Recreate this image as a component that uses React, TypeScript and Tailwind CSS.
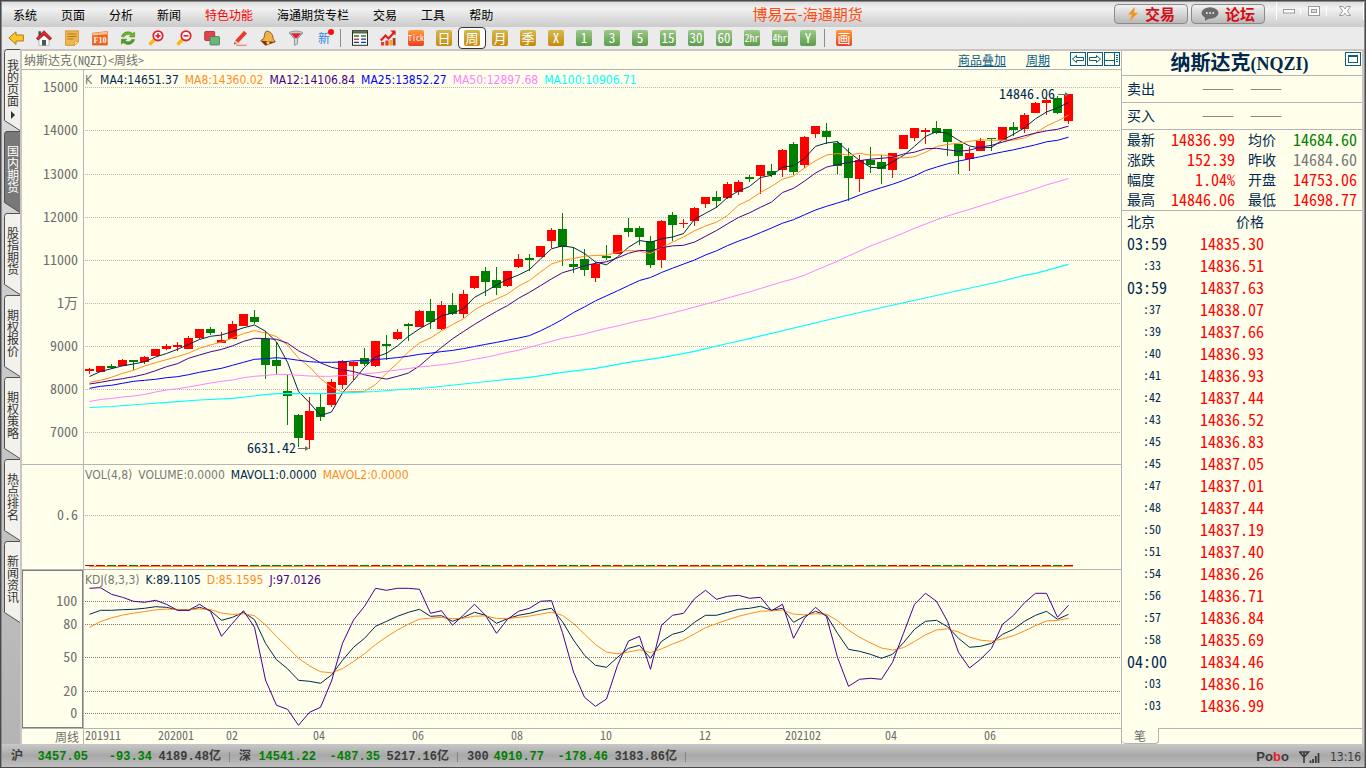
import React from 'react';

const MONO = 'font-["Noto_Sans_Mono_CJK_SC","Liberation_Mono","Noto_Sans_CJK_SC",monospace]';
const LEGEND = 'font-["DejaVu_Sans_Condensed","DejaVu_Sans","Noto_Sans_CJK_SC",sans-serif]';

const NAVY = '#002850';
const ORANGE = '#ff8c1e';
const PURPLE = '#46008c';

/* ---------- chart data: [rising, high, body top, body bottom, low] ---------- */
type Candle = [number, number, number, number, number];

const CANDLES: Candle[] = [
  [1, 368, 369, 371, 374], [1, 366, 366, 372, 372], [0, 364, 366, 368, 369], [1, 359, 360, 366, 366],
  [0, 360, 360, 362, 370], [1, 356, 357, 362, 364], [1, 349, 349, 356, 356], [1, 344, 346, 349, 350],
  [1, 342, 345, 347, 351], [1, 336, 338, 349, 349], [1, 329, 329, 338, 339], [0, 327, 329, 333, 335],
  [1, 332, 340, 343, 343], [1, 321, 324, 339, 339], [1, 314, 314, 326, 326], [0, 310, 317, 322, 324],
  [0, 331, 339, 365, 379], [0, 342, 360, 366, 374], [0, 375, 391, 396, 425], [0, 414, 415, 438, 447],
  [1, 397, 411, 440, 449], [0, 394, 407, 417, 421], [1, 379, 382, 405, 407], [1, 360, 361, 385, 389],
  [1, 361, 362, 366, 380], [0, 348, 358, 364, 366], [1, 341, 341, 366, 367], [0, 335, 344, 346, 360],
  [1, 329, 332, 339, 340], [0, 323, 324, 326, 341], [1, 310, 311, 327, 327], [0, 299, 311, 322, 329],
  [1, 301, 305, 329, 330], [0, 293, 305, 314, 315], [1, 290, 294, 314, 318], [1, 276, 276, 288, 289],
  [0, 267, 271, 282, 296], [0, 267, 280, 288, 295], [1, 271, 271, 286, 287], [1, 254, 259, 267, 268],
  [0, 254, 258, 260, 271], [1, 246, 246, 257, 257], [1, 228, 230, 241, 248], [0, 213, 229, 247, 266],
  [0, 247, 264, 267, 273], [0, 249, 259, 270, 276], [1, 262, 264, 278, 282], [0, 245, 256, 258, 260],
  [1, 235, 235, 254, 254], [0, 218, 228, 232, 237], [0, 226, 228, 237, 245], [0, 236, 241, 265, 268],
  [1, 220, 221, 260, 268], [0, 212, 215, 225, 241], [1, 219, 223, 224, 228], [1, 207, 208, 221, 226],
  [1, 197, 197, 204, 208], [0, 191, 197, 201, 208], [1, 182, 184, 198, 199], [1, 180, 182, 192, 195],
  [0, 175, 177, 179, 182], [1, 165, 165, 176, 194], [0, 164, 171, 175, 177], [1, 149, 150, 170, 177],
  [0, 142, 144, 172, 175], [1, 136, 137, 165, 168], [1, 126, 126, 134, 138], [0, 123, 131, 137, 144],
  [0, 141, 143, 166, 174], [0, 148, 156, 178, 201], [1, 155, 160, 179, 192], [0, 147, 160, 165, 173],
  [0, 155, 162, 169, 184], [1, 153, 153, 170, 178], [1, 135, 135, 149, 149], [1, 128, 128, 138, 141],
  [1, 128, 130, 132, 144], [0, 121, 128, 133, 134], [0, 129, 129, 142, 156], [0, 144, 144, 156, 174],
  [1, 147, 153, 159, 171], [1, 138, 141, 151, 151], [0, 138, 138, 139, 151], [1, 127, 127, 140, 140],
  [0, 122, 127, 130, 136], [1, 113, 115, 129, 133], [1, 102, 103, 113, 113], [1, 98, 100, 103, 115],
  [0, 96, 98, 113, 114], [1, 94, 94, 121, 124],
];

const barX = (i: number) => 89.5 + 11 * i;
const closes = CANDLES.map((c) => (c[0] ? c[2] : c[3]));

/* Moving average over n bars; `head` supplies the bars before n closes exist. */
function average(n: number, head: number[]): number[] {
  return closes.map((_, i) => {
    if (i < head.length) return head[i];
    const part = closes.slice(i - n + 1, i + 1);
    return part.reduce((a, b) => a + b, 0) / n;
  });
}

const MA4 = average(4, [376.5, 371.5, 368.7]);
const MA8 = average(8, [382.3, 380.3, 377.3, 373.3, 370.3, 366, 362.7]);
const MA12 = average(12, [384, 382.3, 380.3, 378.7, 376.7, 374.3, 370.7, 366.7, 363.7, 358.3, 355]);
const MA25 = average(25, [
  388.3, 386.3, 385.3, 383.3, 381.3, 380.3, 379.3, 377.7, 376.7, 374.7, 372.3, 370.3, 368.3, 365.3, 362.3, 359.3,
  358.7, 357.7, 358.7, 360.3, 361.7, 362.3, 362.3, 362,
]);
const MA50 = average(50, [
  401.5, 399.5, 398.5, 397, 396, 394.5, 392, 390, 388.7, 387, 385, 383, 381.3, 380, 377.7, 376.3, 375.5, 374.3,
  374.5, 375.3, 376, 376.3, 376.3, 375.5, 375, 373.7, 373, 371.3, 370, 368.5, 367, 366, 364.7, 363.3, 361.3, 359.3,
  357.3, 355, 352.3, 350.3, 347.3, 344.3, 341.3, 338.3, 336.3, 334, 331, 328.3, 326,
]);
const MA100: [number, number][] = [
  [0, 407.5], [2, 406.5], [5, 404], [8, 401.7], [10, 400], [13, 398.3], [16, 394.7], [17, 393.7], [22, 393.7],
  [26, 391.5], [29, 389], [31, 387.5], [34, 384], [37, 380.5], [40, 377.3], [43, 372.3], [46, 368.3], [49, 362.3],
  [52, 357.7], [55, 351.3], [58, 343.5], [60, 338.7], [69, 315], [78, 293], [83, 281], [85, 275.3], [86, 273.3],
  [89, 264.3],
];

const KDJ_K = [
  614.3, 610.3, 610.3, 609.7, 609.3, 608.3, 606.7, 607.3, 610, 610.3, 607.3, 610.7, 620.3, 617.3, 612.3, 619.7,
  643.3, 659.7, 668.7, 680.3, 681.3, 683.3, 675, 660.3, 647.3, 638.3, 626.3, 621.3, 616.3, 612.3, 609.3, 616.3,
  615.7, 621.3, 617.3, 612.3, 615.3, 623.3, 618.7, 615.3, 613.3, 610.3, 608.3, 621.7, 640, 655.3, 665.3, 667.3,
  657.3, 648.3, 645.3, 658.3, 641.3, 634.3, 631.3, 622.3, 615.3, 615.3, 612.3, 609.3, 608.3, 606.3, 610.3, 608.3,
  622.3, 616.3, 611.3, 615.3, 633.3, 649.3, 651.3, 654.3, 658.3, 654.3, 642.7, 629.3, 621.3, 620.3, 626.7, 638.3,
  647.3, 646.3, 643.3, 634.3, 629.3, 621.3, 615.3, 611.3, 619.3, 614.3,
];
const KDJ_J = [
  588.3, 587.7, 594.3, 597.3, 601.3, 602.3, 600.3, 604.3, 610.3, 610.3, 604.3, 611.3, 636.3, 623.3, 610.7, 627.3,
  680, 705.3, 709.3, 725.3, 712.3, 707.3, 681, 643.3, 620, 606.3, 588.3, 590.3, 588.3, 588.3, 589.3, 613.3, 610.7,
  625.3, 615, 604.3, 615.3, 633.3, 619.3, 611.3, 608.3, 601.3, 600.7, 632.7, 672, 697.3, 706.3, 699, 665.3, 641,
  636.3, 669.3, 625.3, 615.3, 613.3, 598.7, 590.3, 599.3, 596.3, 595.3, 598.3, 597.3, 610.7, 604.3, 638.3, 618.3,
  607.3, 616.7, 657.3, 686.3, 679.3, 678.3, 679.3, 662.3, 633.3, 604.3, 593.3, 601.3, 621.3, 652.3, 668, 659.3,
  648.3, 624.3, 615.3, 602.7, 593.3, 593.3, 617.3, 605.3,
];
/* D is the smoothed K line: two parts of the previous value, one part of K. */
const KDJ_D: number[] = [];
KDJ_K.forEach((k, i) => KDJ_D.push(i === 0 ? 627.3 : (2 * KDJ_D[i - 1] + k) / 3));

const path = (ys: number[]) => ys.map((y, i) => `${barX(i)},${y.toFixed(1)}`).join(' ');

function Line({ ys, color }: { ys: number[]; color: string }) {
  return <polyline points={path(ys)} fill="none" stroke={color} strokeWidth="1" vectorEffect="non-scaling-stroke" />;
}

function Grid({ ys, color }: { ys: number[]; color: string }) {
  return (
    <g stroke={color} strokeDasharray="1 1" shapeRendering="crispEdges">
      {ys.map((y) => (
        <line key={y} x1="85" x2="1121" y1={y + 0.5} y2={y + 0.5} />
      ))}
    </g>
  );
}

function Axis({ top, height, marks }: { top: number; height: number; marks: [string, number][] }) {
  return (
    <svg className={`block h-full w-full ${MONO} text-sm`} fill="#6e6e6e">
      {marks.map(([label, y]) => (
        <text key={label} x="92%" y={`${((y - 1 - top) / height) * 100}%`} textAnchor="end" dominantBaseline="central">
          {label}
        </text>
      ))}
    </svg>
  );
}

function Legend({ items }: { items: [string, string][] }) {
  return (
    <div className={`absolute left-px top-0.5 flex gap-1.5 whitespace-nowrap text-xs leading-4 ${LEGEND}`}>
      {items.map(([text, cls]) => (
        <span key={text} className={cls}>
          {text}
        </span>
      ))}
    </div>
  );
}

/* ------------------------------- tool icons ------------------------------- */
const ICONS: Record<string, React.ReactNode> = {
  后退: (
    <path d="M.8 8 8 1.8V5h7.4v6H8v3.4z" fill="#fbc52c" stroke="#b7791b" strokeLinejoin="round" />
  ),
  首页: (
    <>
      <path d="M3 7v8.5h10V7L8 3z" fill="#fafafa" stroke="#9a9a9a" strokeWidth=".6" />
      <path d="M2.500 1.200h2.400v3l-2.400 2z" fill="#4a4a4a" />
      <path d="M.3 8.400 8 .7l7.700 7.700-2 1.600L8 4.900 2.300 10z" fill="#d8242b" stroke="#7e1216" strokeWidth=".7" />
      <path d="M6 10h4v5.500H6z" fill="#4b555f" />
    </>
  ),
  便签: (
    <>
      <path d="M1.500.8h13v11l-4 3.600h-9z" fill="#eeb64d" stroke="#c88a22" strokeWidth=".7" />
      <path d="M14.500 11.800h-4v3.600z" fill="#fde5b0" stroke="#c88a22" strokeWidth=".5" />
      <path d="M3.500 4h9M3.500 6.500h9M3.500 9h6" stroke="#a8701a" strokeWidth=".9" />
    </>
  ),
  F10: (
    <>
      <path d="M.5 3.200 15.300 1.600v13.500H.5z" fill="#f0641e" stroke="#d04a12" strokeWidth=".6" />
      <path d="M.5 3.200 15.300 1.600v2.600L.5 5.600z" fill="#fbc089" />
      <text x="8" y="12.600" fontSize="8" fontWeight="700" textAnchor="middle" fill="#fff">
        F10
      </text>
    </>
  ),
  刷新: (
    <>
      <path d="M1.500 6.800C2 3.600 5 1.800 8 1.800c2 0 3.600.7 4.800 1.800L14.600 2v5H9.200l1.600-1.600C9 3.900 5 4.300 4.300 6.800z" fill="#6fb52f" stroke="#3f7d16" strokeWidth=".5" />
      <path d="M14.500 9.400c-.5 3.200-3.500 5-6.500 5-2 0-3.600-.7-4.800-1.800L1.400 14.200v-5h5.400L5.200 10.800C7 12.300 11 11.900 11.700 9.400z" fill="#4f9a22" stroke="#3f7d16" strokeWidth=".5" />
    </>
  ),
  放大: (
    <>
      <path d="m6.500 9.500-4 4" stroke="#f7b917" strokeWidth="3.600" strokeLinecap="round" />
      <circle cx="10" cy="5.800" r="4.700" fill="#fff" stroke="#e2212b" strokeWidth="1.800" />
      <path d="M10 3.300v5M7.500 5.800h5" stroke="#e2212b" strokeWidth="1.700" />
    </>
  ),
  缩小: (
    <>
      <path d="m6.500 9.500-4 4" stroke="#f7b917" strokeWidth="3.600" strokeLinecap="round" />
      <circle cx="10" cy="5.800" r="4.700" fill="#fff" stroke="#e2212b" strokeWidth="1.800" />
      <path d="M7.500 5.800h5" stroke="#e2212b" strokeWidth="1.700" />
    </>
  ),
  叠加: (
    <>
      <rect x=".7" y="1.500" width="10" height="9" rx=".8" fill="#e0444b" stroke="#b41f27" strokeWidth=".8" />
      <rect x="6" y="6.500" width="9.500" height="8.500" rx=".8" fill="#6fb27a" stroke="#3e7f4b" strokeWidth=".8" />
    </>
  ),
  画笔: (
    <>
      <path d="m2 14.500 1.500-4.200L12 .8l3 2.600-8.600 9.400z" fill="#ea3a2d" />
      <path d="m3.500 10.300 2.900 2.500L2 14.500z" fill="#f0c48c" />
      <path d="M2 14.500l.7-2 1.100 1z" fill="#333" />
      <path d="M4 15.300h10.500" stroke="#ef7d75" strokeWidth="1.200" />
    </>
  ),
  预警: (
    <>
      <path d="M6.200 1.200C10.500 1 13 4.500 13 8.500l2.300 3.300L5.500 15.300.8 10.600l2.600-1.700C4.800 7.200 4 3.200 6.200 1.200z" fill="#efb54a" stroke="#8c4c15" strokeWidth=".9" />
      <path d="M1 10.800c3 .2 8.500.5 14 1l-9.600 3.400z" fill="#7a3713" />
      <circle cx="8" cy="12.800" r="1.600" fill="#f6cf4c" />
    </>
  ),
  筛选: (
    <>
      <path d="M1.500 3.200 6.600 9v6.300l2.800-1.500V9l5.100-5.800z" fill="#dfe3e6" stroke="#7d858c" strokeWidth=".9" />
      <ellipse cx="8" cy="3" rx="6.700" ry="1.900" fill="#c9ced2" stroke="#7d858c" strokeWidth=".8" />
      <path d="M3.200 3.200h9.600L9.200 8.200H6.800z" fill="#dc2733" />
    </>
  ),
  报价表: (
    <>
      <rect x=".5" y=".7" width="15" height="14.600" fill="#fff" stroke="#26301f" />
      <path d="M1 2.300h14" stroke="#55664a" strokeWidth="2.400" />
      <path d="M2 6h5M9 6h5" stroke="#2c7d26" strokeWidth="1.300" />
      <path d="M2 9.200h5" stroke="#cf2222" strokeWidth="1.300" />
      <path d="M9 9.200h5M2 12.400h5M9 12.400h5" stroke="#1b2f9c" strokeWidth="1.300" />
    </>
  ),
  走势: (
    <>
      <path d="M.8 10.500 5.500 5.500l3 3L15 1.500" fill="none" stroke="#e01e1e" strokeWidth="2.200" />
      <path d="M10.300.6h5.200v5z" fill="#e01e1e" />
      <path d="M1 12h3.200v3.500H1zM5.400 10.500h3.200v5H5.400z" fill="#e23a2b" />
      <path d="M9.400 10h2.700v5.500H9.400z" fill="#f2a62a" />
      <path d="M12.700 8h2.800v7.500h-2.800z" fill="#a8431c" />
    </>
  ),
};

function Icon({ name }: { name: string }) {
  return (
    <svg viewBox="0 0 16 16" className="h-4 w-4 font-['Liberation_Serif',serif]">
      {ICONS[name]}
    </svg>
  );
}

const GOLD = 'bg-gradient-to-b from-[#d3ba4c] to-[#c78900] text-white';
const GREEN = 'bg-gradient-to-b from-[#9cc886] to-[#5c9c4c] text-white';
const RED = 'bg-gradient-to-b from-[#ff9a3c] to-[#e83c1e] text-white';

function Badge({ text, tone }: { text: string; tone: string }) {
  const size = text.length > 3 ? 'text-[8px]' : text.length > 2 ? 'text-[10px]' : 'text-[13px]';
  return (
    <span className={`flex h-4 w-4 items-center justify-center rounded-xs leading-4 ${MONO} ${size} ${tone}`}>
      {text}
    </span>
  );
}

const PERIODS: [string, string][] = [
  ['Tick', RED], ['日', GOLD], ['周', GOLD], ['月', GOLD], ['季', GOLD], ['X', GOLD], ['1', GREEN], ['3', GREEN],
  ['5', GREEN], ['15', GREEN], ['30', GREEN], ['60', GREEN], ['2hr', GREEN], ['4hr', GREEN], ['Y', GREEN],
];

const Separator = () => (
  <span className="flex w-2 py-0.5">
    <span className="ml-0.5 w-px bg-[#8c8c8c]" />
  </span>
);

function Toolbar() {
  const tool = 'flex w-7 items-center justify-center';
  return (
    <div className="flex h-[22px] shrink-0 bg-[#ebebeb]">
      {['后退', '首页', '便签', 'F10', '刷新', '放大', '缩小', '叠加', '画笔', '预警', '筛选'].map((name) => (
        <button key={name} aria-label={name} className={tool}>
          <Icon name={name} />
        </button>
      ))}
      <button className={`${tool} relative text-xs text-[#2f8ce6]`}>
        新<span className="absolute right-1 top-0.5 h-1.5 w-1.5 rounded-full bg-[#ff0a0a]" />
      </button>
      <Separator />
      {['报价表', '走势'].map((name) => (
        <button key={name} aria-label={name} className={tool}>
          <Icon name={name} />
        </button>
      ))}
      {PERIODS.map(([text, tone]) => (
        <button key={text} className={text === '周' ? `${tool} rounded-sm border border-[#333] bg-white` : tool}>
          <Badge text={text} tone={tone} />
        </button>
      ))}
      <Separator />
      <button className={tool}>
        <Badge text="画" tone={RED} />
      </button>
    </div>
  );
}

function TitleBar() {
  const menus = ['系统', '页面', '分析', '新闻', '特色功能', '海通期货专栏', '交易', '工具', '帮助'];
  const pill =
    'flex h-5 w-[74px] items-center justify-center gap-1.5 rounded-sm border border-[#8a8a8a] bg-gradient-to-b from-[#f2f2f2] to-[#b9b9b9] text-[15px] font-bold leading-4 text-[#d80c18]';
  return (
    <header className="flex h-[25px] shrink-0 items-start bg-gradient-to-b from-[#dcdcdc] via-[#f2f2f2] via-25% to-[#cbcbcb]">
      <nav className="flex h-full items-center pt-px text-xs">
        {menus.map((m) => (
          <button key={m} className={m === '特色功能' ? 'px-3 text-[#ff0000]' : 'px-3 text-black first:pl-[11px]'}>
            {m}
          </button>
        ))}
      </nav>
      <h1 className="flex-1 pr-1 text-center text-[15px] leading-6 text-[#ff4b0f]">博易云-海通期货</h1>
      <div className="flex gap-[3px] pt-0.5">
        <button className={pill}>
          <svg viewBox="0 0 12 16" className="h-4 w-3">
            <path d="M8 .8 1 8.600h3.800L2.800 15.200 11 6.800H7z" fill="#f7931e" />
          </svg>
          交易
        </button>
        <button className={pill}>
          <svg viewBox="0 0 18 14" className="h-3.5 w-4.5">
            <ellipse cx="9" cy="6" rx="8.500" ry="5.700" fill="#6b6b6b" />
            <path d="M4 9v4.800L9 11z" fill="#6b6b6b" />
            <path d="M5 6h1.600M8.200 6h1.600M11.400 6H13" stroke="#fff" strokeWidth="1.500" />
          </svg>
          论坛
        </button>
      </div>
      <div className="ml-[11px] flex h-[18px] items-center divide-x divide-white border-x border-white">
        <button aria-label="最小化" className="flex w-6 justify-center">
          <svg viewBox="0 0 12 5" className="h-[5px] w-3">
            <rect x=".5" y=".5" width="11" height="3.500" fill="#fff" stroke="#9a9a9a" />
          </svg>
        </button>
        <button aria-label="最大化" className="flex w-[26px] justify-center">
          <svg viewBox="0 0 12 10" className="h-2.5 w-3">
            <rect x=".5" y=".5" width="11" height="9" fill="#fff" stroke="#9a9a9a" />
            <rect x="3.500" y="3.500" width="5" height="3" fill="#ddd" stroke="#9a9a9a" />
          </svg>
        </button>
        <button aria-label="关闭" className="flex w-9 justify-center">
          <svg viewBox="0 0 12 10" className="h-2.5 w-3">
            <path d="M.5.5h3.700L6 3 7.800.5h3.700L8.300 5l3.200 4.500H7.800L6 7 4.200 9.500H.5L3.700 5z" fill="#fff" stroke="#9a9a9a" />
          </svg>
        </button>
      </div>
    </header>
  );
}

function SideTabs() {
  const tabs = ['我的页面', '国内期货', '股指期货', '期权报价', '期权策略', '热点排名', '新闻资讯'];
  return (
    <nav className="w-[18px] shrink-0 bg-gradient-to-b from-[#dcdce0] to-[#b4b4b4]">
      {tabs.map((t, i) => (
        <button key={t} className="relative block h-[82px] w-full">
          <svg viewBox="0 0 18 82" className="absolute inset-0 h-full w-full">
            <path
              d="M18 .5H5Q2.500.5 2.500 3.500V71.500L18 81.500"
              fill={i === 1 ? '#787878' : '#f2f1ec'}
              stroke="#505050"
            />
          </svg>
          <span
            className={`relative flex h-full flex-col items-center pl-1 text-xs leading-3 ${
              i === 1 ? 'pt-3.5 text-white' : i === 0 ? 'pt-2.5 text-[#333]' : 'pt-3.5 text-[#333]'
            }`}
          >
            <span className="w-3">{t}</span>
            {i === 0 && (
              <svg viewBox="0 0 4 8" className="mt-1 h-2 w-1">
                <path d="M0 0l4 4-4 4z" fill="#333" />
              </svg>
            )}
          </span>
        </button>
      ))}
    </nav>
  );
}

function ChartHeader() {
  const box = 'h-3.5 w-4';
  return (
    <div className="flex h-[19px] shrink-0 items-center border-b border-[#b4b4b4] pl-0.5 pr-px text-xs">
      <span className={`flex-1 text-[#6e6e6e] ${MONO}`}>纳斯达克(NQZI)&lt;周线&gt;</span>
      <a href="#overlay" className="mr-5 text-[#0b5c88] underline">
        商品叠加
      </a>
      <a href="#period" className="mr-5 text-[#0b5c88] underline">
        周期
      </a>
      <span className="flex gap-px self-start pt-px">
        {[
          'M2.500 7 6.500 3.500V5.500H13.500V8.500H6.500V10.500z',
          'M13.500 7 9.500 3.500V5.500H2.500V8.500H9.500V10.500z',
          'M1 8.500H10.500M10.500 1V13M12 3.500h2M12 5.500h2M12 7.500h2M12 9.500h2',
        ].map((d, i) => (
          <button key={d} aria-label={['向左', '向右', '布局'][i]}>
            <svg viewBox="0 0 16 14" className={box} fill="none" stroke="#0b5c88">
              <rect x=".5" y=".5" width="15" height="13" />
              <path d={d} />
            </svg>
          </button>
        ))}
      </span>
    </div>
  );
}

function ChartArea() {
  const axisCell = 'border-r border-[#b4b4b4] min-h-0';
  const svg = 'block h-full w-full';
  return (
    <section className="flex min-w-0 flex-1 flex-col border-r border-[#b4b4b4]">
      <ChartHeader />
      <div className="grid min-h-0 flex-1 grid-cols-[62px_minmax(0,1fr)] grid-rows-[minmax(0,395fr)_minmax(0,105fr)_minmax(0,158fr)_16px]">
        <div className={`${axisCell} border-b`}>
          <Axis
            top={70}
            height={394}
            marks={[
              ['15000', 87], ['14000', 130], ['13000', 174], ['12000', 217], ['11000', 260], ['1万', 303],
              ['9000', 346], ['8000', 389], ['7000', 432],
            ]}
          />
        </div>
        <div className="relative min-h-0 border-b border-[#b4b4b4]">
          <svg viewBox="84 70 1037 394" preserveAspectRatio="none" className={svg}>
            <Grid ys={[87, 130, 174, 217, 260, 303, 346, 389, 432]} color="#b8b8b0" />
            <g shapeRendering="crispEdges">
              {CANDLES.map(([up, hi, top, bottom, lo], i) => (
                <g key={i} fill={up ? '#ff0000' : '#008000'}>
                  <rect x={barX(i) - 0.5} y={hi} width="1" height={Math.max(1, lo - hi)} />
                  <rect x={barX(i) - 4.5} y={top} width="9" height={bottom - top} />
                </g>
              ))}
            </g>
            <Line ys={MA4} color={NAVY} />
            <Line ys={MA8} color={ORANGE} />
            <Line ys={MA12} color={PURPLE} />
            <Line ys={MA25} color="#0000ff" />
            <Line ys={MA50} color="#ff82ff" />
            <polyline
              points={MA100.map(([i, y]) => `${barX(i)},${y}`).join(' ')}
              fill="none"
              stroke="#00ffff"
              strokeWidth="1.200"
            />
            <g stroke="#707070" fill="#707070">
              <path d="M1058 94.500h10M298 448.500h10" />
              <path d="M1065 92l4 2.500-4 2.500zM305 446l4 2.500-4 2.500z" stroke="none" />
            </g>
            <g className={`${MONO} text-sm`} fill={NAVY} textAnchor="end">
              <text x="1055" y="99">
                14846.06
              </text>
              <text x="296" y="453">
                6631.42
              </text>
            </g>
          </svg>
          <Legend
            items={[
              ['K', 'mr-0.5 text-[#787878]'],
              ['MA4:14651.37', 'text-[#002850]'],
              ['MA8:14360.02', 'text-[#ff8c1e]'],
              ['MA12:14106.84', 'text-[#46008c]'],
              ['MA25:13852.27', 'text-[#0000ff]'],
              ['MA50:12897.68', 'text-[#ff82ff]'],
              ['MA100:10906.71', 'text-[#00ffff]'],
            ]}
          />
        </div>

        <div className={`${axisCell} border-b`}>
          <Axis top={465} height={104} marks={[['0.6', 515]]} />
        </div>
        <div className="relative min-h-0 border-b border-[#b4b4b4]">
          <svg viewBox="84 465 1037 104" preserveAspectRatio="none" className={svg}>
            <Grid ys={[515]} color="#b8b8b0" />
            <g shapeRendering="crispEdges">
              {CANDLES.map(([up], i) => (
                <rect key={i} x={barX(i) - 4.5} y="565" width="9" height="1" fill={up ? '#d20000' : '#008000'} />
              ))}
              <rect x="89" y="566" width="984" height="1" fill={ORANGE} />
            </g>
          </svg>
          <Legend
            items={[
              ['VOL(4,8)', 'text-[#787878]'],
              ['VOLUME:0.0000', 'text-[#787878]'],
              ['MAVOL1:0.0000', 'text-[#002850]'],
              ['MAVOL2:0.0000', 'text-[#ff8c1e]'],
            ]}
          />
        </div>

        <div className={axisCell}>
          <div className="h-full border border-[#808080]">
            <Axis
              top={571}
              height={156}
              marks={[['100', 601], ['80', 624], ['50', 657], ['20', 691], ['0', 713]]}
            />
          </div>
        </div>
        <div className="relative min-h-0">
          <svg viewBox="84 570 1037 158" preserveAspectRatio="none" className={svg}>
            <Grid ys={[601, 624, 657, 691, 713]} color="#787878" />
            <Line ys={KDJ_K} color={NAVY} />
            <Line ys={KDJ_D} color={ORANGE} />
            <Line ys={KDJ_J} color={PURPLE} />
          </svg>
          <Legend
            items={[
              ['KDJ(8,3,3)', 'text-[#787878]'],
              ['K:89.1105', 'text-[#002850]'],
              ['D:85.1595', 'text-[#ff8c1e]'],
              ['J:97.0126', 'text-[#46008c]'],
            ]}
          />
        </div>

        <div className="border-r border-t border-[#b4b4b4] pr-1 text-right text-xs leading-[15px] text-[#6e6e6e]">
          周线
        </div>
        <div className="border-t border-[#b4b4b4]">
          <svg
            viewBox="84 729 1037 15"
            preserveAspectRatio="none"
            className={`${svg} overflow-visible ${MONO} text-xs`}
            fill="#6e6e6e"
          >
            {(
              [
                ['201911', 103], ['202001', 176], ['02', 232], ['04', 319], ['06', 418], ['08', 517], ['10', 606],
                ['12', 705], ['202102', 803], ['04', 891], ['06', 990],
              ] as [string, number][]
            ).map(([label, x]) => (
              <text key={x} x={x} y="740" textAnchor="middle">
                {label}
              </text>
            ))}
          </svg>
        </div>
      </div>
    </section>
  );
}

const QUOTES: [string, string, string, string, string, string][] = [
  ['最新', '14836.99', 'text-[#ff0000]', '均价', '14684.60', 'text-[#008000]'],
  ['涨跌', '152.39', 'text-[#ff0000]', '昨收', '14684.60', 'text-[#787878]'],
  ['幅度', '1.04%', 'text-[#ff0000]', '开盘', '14753.06', 'text-[#ff0000]'],
  ['最高', '14846.06', 'text-[#ff0000]', '最低', '14698.77', 'text-[#ff0000]'],
];

const TRADES: [string, string][] = [
  ['03:59', '14835.30'], [':33', '14836.51'], ['03:59', '14837.63'], [':37', '14838.07'], [':39', '14837.66'],
  [':40', '14836.93'], [':41', '14836.93'], [':42', '14837.44'], [':43', '14836.52'], [':45', '14836.83'],
  [':45', '14837.05'], [':47', '14837.01'], [':48', '14837.44'], [':50', '14837.19'], [':51', '14837.40'],
  [':54', '14836.26'], [':56', '14836.71'], [':57', '14836.84'], [':58', '14835.69'], ['04:00', '14834.46'],
  [':03', '14836.16'], [':03', '14836.99'],
];

function QuotePanel() {
  const value = `p-0 pb-0.5 text-right text-base leading-[18px] ${MONO}`;
  return (
    <aside className="flex w-60 shrink-0 flex-col text-[#002850]">
      <div className="flex h-[25px] items-center border-b border-[#b4b4b4] pr-px">
        <h2 className="flex-1 pl-3 text-center text-xl font-bold leading-6">
          纳斯达克<span className="font-['Liberation_Serif',serif] text-lg leading-6">(NQZI)</span>
        </h2>
        <button aria-label="弹出" className="self-start pt-px">
          <svg viewBox="0 0 16 14" className="h-3.5 w-4" fill="none" stroke="#0b5c88">
            <rect x=".5" y=".5" width="15" height="13" />
            <rect x="3.500" y="3.500" width="9" height="7" />
            <path d="M3 4h10" strokeWidth="2" />
          </svg>
        </button>
      </div>
      {['卖出', '买入'].map((side) => (
        <div key={side} className="flex h-[27px] items-center border-b border-[#b4b4b4] pb-0.5 pl-[5px] text-sm">
          <span className="w-[75px]">{side}</span>
          <span className="w-12 text-[13px] text-[#707070]">———</span>
          <span className="text-[13px] text-[#707070]">———</span>
        </div>
      ))}
      <table className="w-full table-fixed border-b border-[#b4b4b4] text-sm">
        <tbody>
          {QUOTES.map(([a, av, ac, b, bv, bc]) => (
            <tr key={a} className="h-5 leading-[18px]">
              <th className="w-[33px] p-0 pb-0.5 pl-[5px] text-left font-normal">{a}</th>
              <td className={`w-20 ${value} ${ac}`}>{av}</td>
              <th className="w-[41px] p-0 pb-0.5 pl-[13px] text-left font-normal">{b}</th>
              <td className={`${value} pr-[5px] ${bc}`}>{bv}</td>
            </tr>
          ))}
        </tbody>
      </table>
      <div className="min-h-0 flex-1 overflow-hidden">
        <table className="table-fixed">
          <thead>
            <tr className="h-[22px] text-sm leading-5">
              <th className="w-[62px] p-0 pb-0.5 pl-[5px] text-left font-normal">北京</th>
              <th className="w-20 p-0 pb-0.5 text-right font-normal">价格</th>
            </tr>
          </thead>
          <tbody className={MONO}>
            {TRADES.map(([time, price], i) => (
              <tr key={i} className="h-[22px] text-base leading-5">
                <td className={time.length > 3 ? 'p-0 pb-0.5 pl-[5px]' : 'p-0 pb-0.5 pl-[21px] text-xs'}>{time}</td>
                <td className="p-0 pb-0.5 text-right text-[#ff0000]">{price}</td>
              </tr>
            ))}
          </tbody>
        </table>
      </div>
      <div className="flex h-4 shrink-0 text-xs leading-[14px] text-[#6e6e6e]">
        <button className="w-[37px] rounded-b-sm border-b border-r border-[#b4b4b4]">笔</button>
        <span className="flex-1 border-t border-[#b4b4b4]" />
      </div>
    </aside>
  );
}

const INDEXES = [
  ['沪', '3457.05', '-93.34', '4189.48亿'],
  ['深', '14541.22', '-487.35', '5217.16亿'],
  ['300', '4910.77', '-178.46', '3183.86亿'],
];

function StatusBar() {
  return (
    <footer className="flex h-[23px] shrink-0 items-center bg-gradient-to-b from-[#c8c8c8] via-[#a8a8a8] to-[#c0c0c0] pt-0.5 text-xs font-bold text-[#3c3c3c]">
      <div className="flex flex-1 font-['Liberation_Mono','Noto_Sans_CJK_SC',monospace]">
        {INDEXES.map(([name, price, change, amount]) => (
          <div key={name} className="flex w-[228px] items-center pl-[9px]">
            <span>{name}</span>
            <span className="flex-1 text-right text-[#008000]">{price}</span>
            <span className="w-16 text-right text-[#008000]">{change}</span>
            <span className="w-[69px] text-right">{amount}</span>
            <span className="ml-2 h-2.5 w-px bg-[#858585]" />
          </div>
        ))}
      </div>
      <div className="flex items-center gap-2.5 pr-[3px]">
        <span className="font-['Liberation_Sans',sans-serif] text-[13px] leading-4">
          Po<span className="text-[#f01e28]">b</span>o
        </span>
        <svg viewBox="0 0 21 12" className="h-3 w-[21px]" stroke="#3c3c3c" fill="none" strokeWidth="1.600">
          <path d="M.5 1h9L5 6zM5 1v11" />
          <path d="M11.500 9.500v2.500M14 8v4M16.800 5v7M19.500 2v10" strokeWidth="1.800" />
        </svg>
        <span className={`${LEGEND} text-xs font-normal leading-4`}>13:16</span>
      </div>
    </footer>
  );
}

export default function App() {
  return (
    <div className="flex h-screen flex-col overflow-hidden border border-[#484848] bg-[#ebebeb] font-['Noto_Sans_CJK_SC',sans-serif]">
      <div className="flex min-h-0 flex-1 flex-col border-l border-r border-t border-[#8c8c8c]">
        <TitleBar />
        <Toolbar />
        <div className="flex min-h-0 flex-1">
          <SideTabs />
          <main className="flex min-w-0 flex-1 border-x-2 border-t-2 border-[#ccc4c4] bg-[#ffffeb]">
            <ChartArea />
            <QuotePanel />
          </main>
        </div>
        <StatusBar />
      </div>
    </div>
  );
}
